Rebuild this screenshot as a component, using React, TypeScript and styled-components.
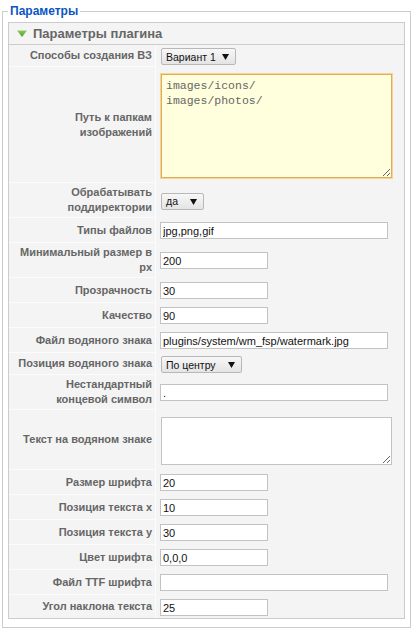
import styled, { createGlobalStyle } from "styled-components"

const GlobalStyle = createGlobalStyle`
  html, body {
    margin: 0;
    padding: 0;
    background: #fff;
  }
  body {
    font-family: "Liberation Sans", Arial, sans-serif;
    font-size: 11px;
    color: #333;
  }
`

type Field =
    | { kind: "select"; label: string; value: string; width: number }
    | { kind: "input"; label: string; value: string; wide?: boolean }
    | { kind: "textarea"; label: string; value: string; height: number; focused?: boolean }

const fields: Field[] = [
    { kind: "select", label: "Способы создания ВЗ", value: "Вариант 1", width: 75 },
    { kind: "textarea", label: "Путь к папкам\nизображений", value: "images/icons/\nimages/photos/", height: 104, focused: true },
    { kind: "select", label: "Обрабатывать\nподдиректории", value: "да", width: 43 },
    { kind: "input", label: "Типы файлов", value: "jpg,png,gif", wide: true },
    { kind: "input", label: "Минимальный размер в\npx", value: "200" },
    { kind: "input", label: "Прозрачность", value: "30" },
    { kind: "input", label: "Качество", value: "90" },
    { kind: "input", label: "Файл водяного знака", value: "plugins/system/wm_fsp/watermark.jpg", wide: true },
    { kind: "select", label: "Позиция водяного знака", value: "По центру", width: 81 },
    { kind: "input", label: "Нестандартный\nконцевой символ", value: ".", wide: true },
    { kind: "textarea", label: "Текст на водяном знаке", value: "", height: 48 },
    { kind: "input", label: "Размер шрифта", value: "20" },
    { kind: "input", label: "Позиция текста x", value: "10" },
    { kind: "input", label: "Позиция текста y", value: "30" },
    { kind: "input", label: "Цвет шрифта", value: "0,0,0" },
    { kind: "input", label: "Файл TTF шрифта", value: "", wide: true },
    { kind: "input", label: "Угол наклона текста", value: "25" },
]

const Control = ({ field }: { field: Field }) => {
    if (field.kind === "select") {
        return (
            <SelectBox type="button" $width={field.width}>
                <span>{field.value}</span>
                <svg width="7" height="7" viewBox="0 0 7 7">
                    <path d="M0 1h7L3.5 7z" fill="#111" />
                </svg>
            </SelectBox>
        )
    }
    if (field.kind === "textarea") {
        return (
            <TextArea
                $height={field.height}
                $focused={!!field.focused}
                defaultValue={field.value}
                spellCheck={false}
            />
        )
    }
    return <TextInput $wide={!!field.wide} defaultValue={field.value} spellCheck={false} />
}

const App = () => {
    return (
        <>
            <GlobalStyle />
            <Fieldset>
                <Legend>Параметры</Legend>
                <Panel>
                    <PanelTitle>
                        <svg width="10" height="7" viewBox="0 0 10 7">
                            <defs>
                                <linearGradient id="tri" x1="0" y1="0" x2="0" y2="1">
                                    <stop offset="0" stopColor="#8fcc5c" />
                                    <stop offset="1" stopColor="#4f9a22" />
                                </linearGradient>
                            </defs>
                            <path d="M0 0.5h10L5 7z" fill="url(#tri)" />
                        </svg>
                        Параметры плагина
                    </PanelTitle>
                    <ParamList>
                        {fields.map((f) => (
                            <ParamRow key={f.label}>
                                <ParamKey>{f.label}</ParamKey>
                                <ParamValue>
                                    <Control field={f} />
                                </ParamValue>
                            </ParamRow>
                        ))}
                    </ParamList>
                </Panel>
            </Fieldset>
        </>
    )
}

export default App

const Fieldset = styled.fieldset`
    margin: 3px 4px 0 2px;
    padding: 0 5px 8px 5px;
    border: 1px solid #ccc;
    min-inline-size: 0;
`

const Legend = styled.legend`
    padding: 0 2px;
    color: #0b55c4;
    font-size: 12px;
    font-weight: bold;
    line-height: 16px;
`

const Panel = styled.div`
    margin-top: 3px;
    border: 1px solid #ccc;
    background: #f4f4f4;
`

const PanelTitle = styled.h3`
    display: flex;
    align-items: center;
    gap: 6px;
    margin: 0;
    height: 21px;
    padding: 0 0 0 8px;
    border-bottom: 1px solid #ccc;
    color: #666;
    font-size: 13px;
    font-weight: bold;
`

const ParamList = styled.div`
    display: flex;
    flex-direction: column;
`

const ParamRow = styled.div`
    display: grid;
    grid-template-columns: 147px 1fr;

    &:last-child > div:first-child {
        border-bottom: none;
    }
    &:last-child > div:last-child {
        padding-bottom: 0;
    }
`

const ParamKey = styled.div`
    display: flex;
    align-items: center;
    justify-content: flex-end;
    padding: 2px 3px;
    border-right: 1px solid #fcfcfc;
    border-bottom: 1px solid #fcfcfc;
    color: #666;
    font-weight: bold;
    font-size: 11px;
    line-height: 15px;
    text-align: right;
    white-space: pre-line;
`

const ParamValue = styled.div`
    display: flex;
    align-items: center;
    padding: 2px 4px;
`

const TextInput = styled.input<{ $wide: boolean }>`
    box-sizing: border-box;
    width: ${(p) => (p.$wide ? 228 : 108)}px;
    height: 17px;
    margin: 2px 0;
    padding: 0 2px;
    border: 1px solid #c3c3c3;
    background: #fff;
    color: #111;
    font-family: "Liberation Sans", Arial, sans-serif;
    font-size: 11px;
    outline: none;
`

const TextArea = styled.textarea<{ $height: number; $focused: boolean }>`
    display: block;
    box-sizing: border-box;
    width: 231px;
    height: ${(p) => p.$height}px;
    margin: 5px 0 3px 1px;
    padding: 3px 4px;
    border: 1px solid ${(p) => (p.$focused ? "#e2ad55" : "#c3c3c3")};
    box-shadow: ${(p) => (p.$focused ? "0 0 0 1px #f3d59a" : "none")};
    background: ${(p) => (p.$focused ? "#ffffdd" : "#fff")};
    color: #666;
    font-family: "Liberation Mono", "Courier New", monospace;
    font-size: 11.5px;
    line-height: 15px;
    outline: none;
`

const SelectBox = styled.button<{ $width: number }>`
    display: inline-flex;
    align-items: center;
    justify-content: space-between;
    gap: 4px;
    box-sizing: border-box;
    width: ${(p) => p.$width}px;
    height: 17px;
    margin: 1px 0 0 1px;
    padding: 0 6px 0 4px;
    border: 1px solid #b8b8b8;
    border-radius: 2px;
    background: linear-gradient(#f7f7f7, #e4e4e4);
    color: #111;
    font-family: "Liberation Sans", Arial, sans-serif;
    font-size: 10.5px;
    white-space: nowrap;
    cursor: default;
`
